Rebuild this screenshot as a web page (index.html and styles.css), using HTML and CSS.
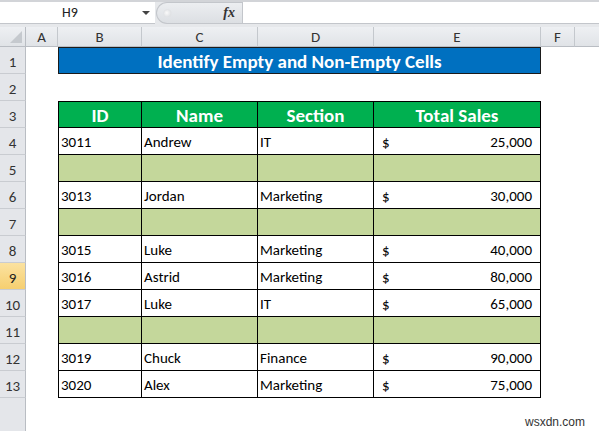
FILE: index.html
```html
<!DOCTYPE html>
<html>
<head>
<meta charset="utf-8">
<link rel="stylesheet" href="styles.css">
</head>
<body>
<div class="fbar">
  <div class="namebox"><span class="ref">H9</span><span class="caret"></span></div>
  <div class="fxzone"><span class="knob"></span><span class="fx">fx</span></div>
  <div class="finput"></div>
</div>
<div class="sheet">
  <div class="row colhead">
    <div class="corner"><span class="tri"></span></div>
    <div class="ch">A</div><div class="ch">B</div><div class="ch">C</div><div class="ch">D</div><div class="ch">E</div><div class="ch">F</div><div class="ch last"></div>
  </div>
  <div class="row">
    <div class="rh">1</div><div></div>
    <div class="title">Identify Empty and Non-Empty Cells</div>
  </div>
  <div class="row"><div class="rh">2</div></div>
  <div class="row">
    <div class="rh">3</div><div></div>
    <div class="c hd first top">ID</div><div class="c hd top">Name</div><div class="c hd top">Section</div><div class="c hd top">Total Sales</div>
  </div>
  <div class="row">
    <div class="rh">4</div><div></div>
    <div class="c first">3011</div><div class="c">Andrew</div><div class="c">IT</div><div class="c money"><span>$</span><span>25,000</span></div>
  </div>
  <div class="row">
    <div class="rh">5</div><div></div>
    <div class="c e first"></div><div class="c e"></div><div class="c e"></div><div class="c e"></div>
  </div>
  <div class="row">
    <div class="rh">6</div><div></div>
    <div class="c first">3013</div><div class="c">Jordan</div><div class="c">Marketing</div><div class="c money"><span>$</span><span>30,000</span></div>
  </div>
  <div class="row">
    <div class="rh">7</div><div></div>
    <div class="c e first"></div><div class="c e"></div><div class="c e"></div><div class="c e"></div>
  </div>
  <div class="row">
    <div class="rh">8</div><div></div>
    <div class="c first">3015</div><div class="c">Luke</div><div class="c">Marketing</div><div class="c money"><span>$</span><span>40,000</span></div>
  </div>
  <div class="row">
    <div class="rh sel">9</div><div></div>
    <div class="c first">3016</div><div class="c">Astrid</div><div class="c">Marketing</div><div class="c money"><span>$</span><span>80,000</span></div>
  </div>
  <div class="row">
    <div class="rh">10</div><div></div>
    <div class="c first">3017</div><div class="c">Luke</div><div class="c">IT</div><div class="c money"><span>$</span><span>65,000</span></div>
  </div>
  <div class="row">
    <div class="rh">11</div><div></div>
    <div class="c e first"></div><div class="c e"></div><div class="c e"></div><div class="c e"></div>
  </div>
  <div class="row">
    <div class="rh">12</div><div></div>
    <div class="c first">3019</div><div class="c">Chuck</div><div class="c">Finance</div><div class="c money"><span>$</span><span>90,000</span></div>
  </div>
  <div class="row">
    <div class="rh">13</div><div></div>
    <div class="c first">3020</div><div class="c">Alex</div><div class="c">Marketing</div><div class="c money"><span>$</span><span>75,000</span></div>
  </div>
  <div class="row filler">
    <div class="rh blank"></div>
    <div class="wm">wsxdn.com</div>
  </div>
</div>
</body>
</html>
```

FILE: styles.css
```css
* { box-sizing: border-box; }
html, body { margin: 0; padding: 0; }
body {
  width: 599px;
  height: 431px;
  overflow: hidden;
  background: #ffffff;
  font-family: Carlito, Calibri, Lato, "Liberation Sans", sans-serif;
  color: #000;
}

/* formula bar */
.fbar {
  height: 27px;
  display: flex;
  align-items: flex-start;
  background: #e6e8eb;
  border-top: 2px solid #d2d4d8;
}
.namebox {
  width: 155px;
  height: 22px;
  background: #fff;
  border-bottom: 1px solid #c3c6cb;
  display: flex;
  align-items: center;
}
.ref {
  width: 140px;
  text-align: center;
  font-size: 14px;
  color: #222;
}
.caret {
  width: 0; height: 0;
  border-left: 4px solid transparent;
  border-right: 4px solid transparent;
  border-top: 4px solid #444;
  margin-left: 2px;
}
.fxzone {
  width: 86px;
  height: 22px;
  margin-left: 1px;
  background: linear-gradient(#eceef1, #dcdfe3);
  border: 1px solid #c3c6cb;
  border-right: none;
  border-radius: 11px 0 0 11px;
  display: flex;
  align-items: center;
  justify-content: space-between;
  padding: 0 7px 0 6px;
}
.knob {
  width: 9px; height: 9px;
  border-radius: 50%;
  background: radial-gradient(circle at 40% 40%, #fafafa, #d4d7db);
  border: 1px solid #e2e4e7;
}
.fx {
  font-family: "Liberation Serif", serif;
  font-style: italic;
  font-weight: bold;
  font-size: 14px;
  color: #333;
}
.finput {
  flex: 1;
  height: 22px;
  background: #fff;
  border-left: 1px solid #c3c6cb;
  border-bottom: 1px solid #c3c6cb;
}

/* sheet */
.sheet { display: flex; flex-direction: column; }
.row {
  display: grid;
  grid-template-columns: 26px 32px 84px 116px 116px 167px 34px 1fr;
  height: 27px;
}
.colhead { height: 20px; }
.corner, .ch {
  background: linear-gradient(#eef0f3, #e0e3e7);
  border-right: 1px solid #c4c8cd;
  border-bottom: 1px solid #b9bdc3;
  display: flex;
  align-items: center;
  justify-content: center;
  font-size: 15px;
  color: #333;
}
.ch.last { border-right: none; }
.corner { position: relative; border-right-color: #b9bdc3; }
.tri {
  position: absolute;
  right: 3px; bottom: 3px;
  width: 0; height: 0;
  border-left: 12px solid transparent;
  border-bottom: 12px solid #c5c9ce;
}
.rh {
  background: #e4e6ea;
  border-right: 1px solid #b9bdc3;
  border-bottom: 1px solid #c9ccd1;
  display: flex;
  align-items: center;
  justify-content: center;
  font-size: 15px;
  color: #333;
  padding-top: 3px;
}
.rh.sel {
  background: linear-gradient(#fbe2a0, #f6cf70);
  color: #222;
}
.rh.blank { border-bottom: none; }

.title {
  grid-column: 3 / 7;
  background: #0070c0;
  border: 1px solid #1b1b1b;
  color: #fff;
  font-weight: bold;
  font-size: 19px;
  display: flex;
  align-items: center;
  justify-content: center;
  padding-top: 1px;
}

.c {
  border-right: 1px solid #000;
  border-bottom: 1px solid #000;
  display: flex;
  align-items: center;
  padding: 2px 0 0 2px;
  font-size: 15px;
}
.c.first { border-left: 1px solid #000; }
.c.top { border-top: 1px solid #000; }
.c.hd {
  background: #00b050;
  color: #fff;
  font-weight: bold;
  font-size: 19px;
  justify-content: center;
  padding-left: 0;
  padding-top: 1px;
}
.c.e { background: #c4d79b; }
.c.money {
  justify-content: space-between;
  padding-left: 8px;
  padding-right: 8px;
}

.filler { height: 33px; }
.wm {
  grid-column: 2 / 9;
  align-self: end;
  justify-self: end;
  margin: 0 14px 2px 0;
  font-family: "Liberation Sans", Arial, sans-serif;
  font-size: 12px;
  color: #333;
}
```
